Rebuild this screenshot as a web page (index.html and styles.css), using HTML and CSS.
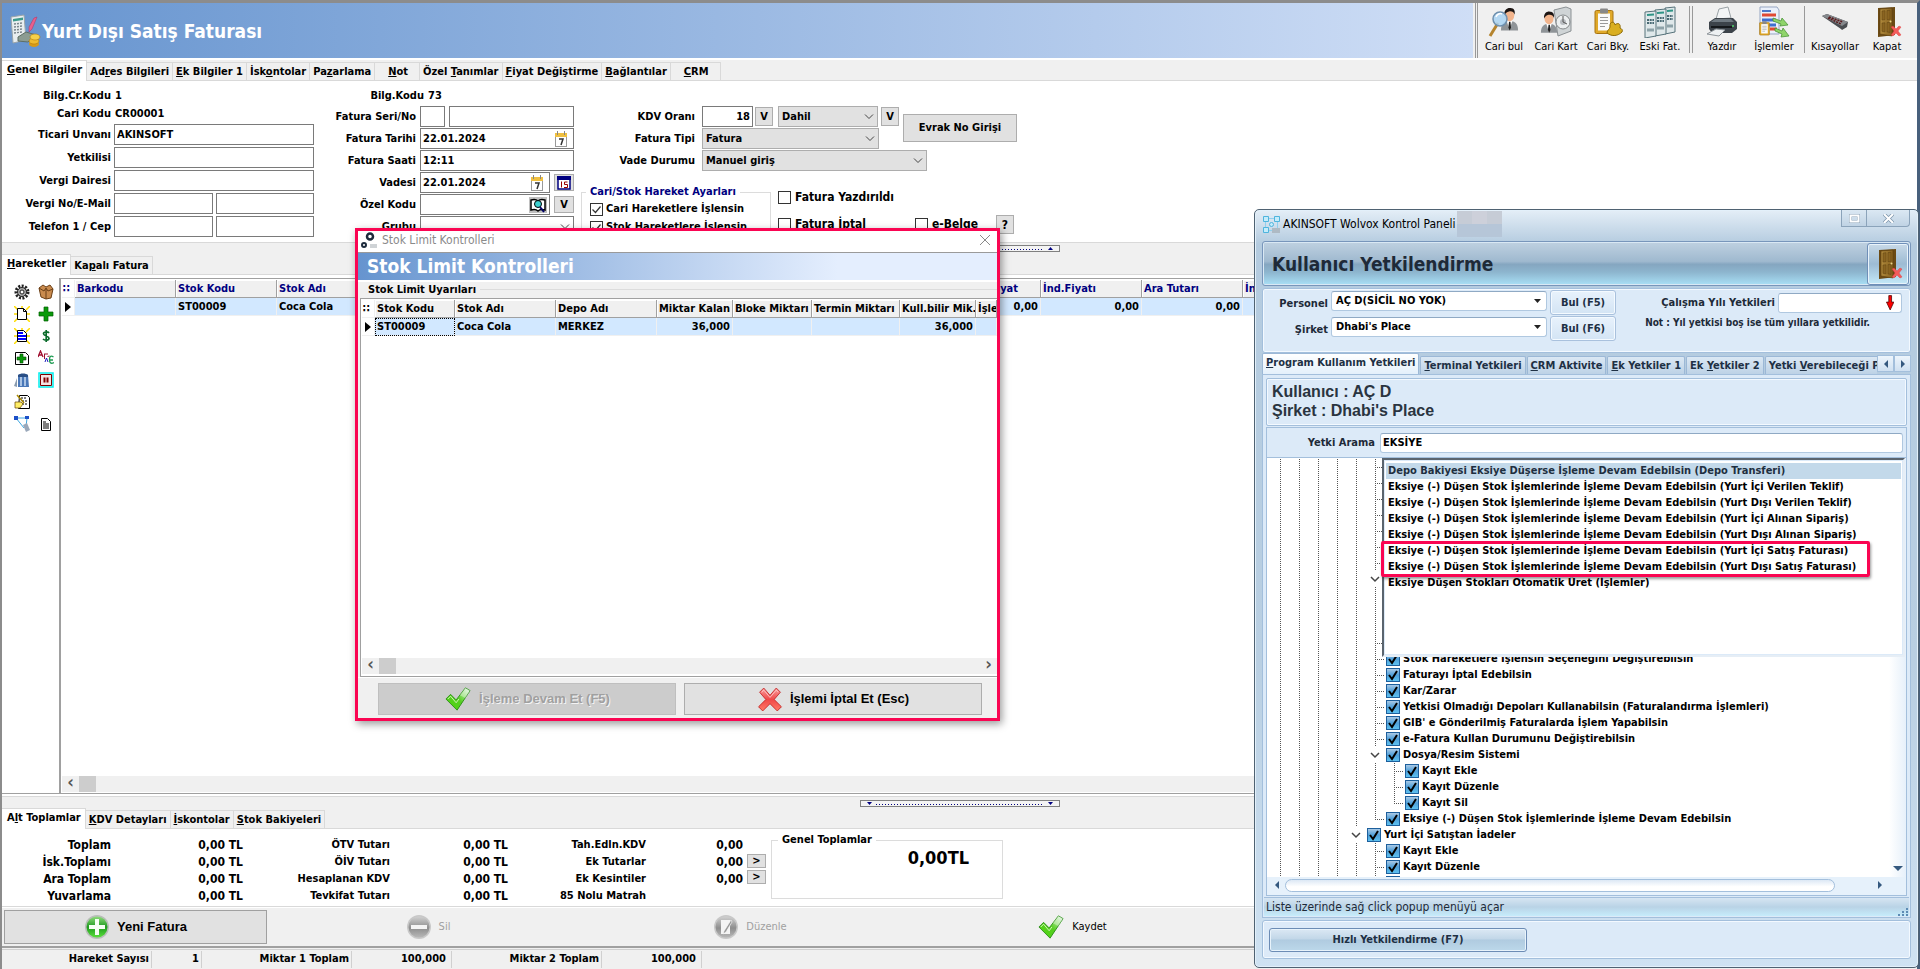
FILE: index.html
```html
<!DOCTYPE html>
<html lang="tr">
<head>
    <meta charset="UTF-8">
    <meta name="viewport" content="width=device-width, initial-scale=1.0">
    <title>Yurt Dışı Satış Faturası</title>
    <link rel="stylesheet" href="styles.css">
</head>
<body>
    <!-- shared icons -->
    <svg class="defs" width="0" height="0">
        <defs>
            <linearGradient id="gGreen" x1="0" y1="0" x2="0" y2="1"><stop offset="0" stop-color="#8fdc7c"/><stop offset=".5" stop-color="#1f9a1f"/><stop offset="1" stop-color="#5ae03c"/></linearGradient>
            <linearGradient id="gGray" x1="0" y1="0" x2="0" y2="1"><stop offset="0" stop-color="#d0d0d0"/><stop offset=".55" stop-color="#8e8e8e"/><stop offset="1" stop-color="#b8b8b8"/></linearGradient>
            <linearGradient id="gRed" x1="0" y1="0" x2="0" y2="1"><stop offset="0" stop-color="#f9a0a0"/><stop offset=".5" stop-color="#f04848"/><stop offset="1" stop-color="#ff7a66"/></linearGradient>
            <linearGradient id="gCheck" x1="0" y1="1" x2="1" y2="0"><stop offset="0" stop-color="#4fd60e"/><stop offset=".5" stop-color="#55cf20"/><stop offset="1" stop-color="#e8f6ea"/></linearGradient>
            <linearGradient id="gDoor" x1="0" y1="0" x2="1" y2="0"><stop offset="0" stop-color="#b08a3c"/><stop offset="1" stop-color="#86601e"/></linearGradient>
        </defs>
        <symbol id="i-door" viewBox="0 0 32 32">
            <path d="M7 2l17-1v28l-17 2z" fill="#6b4a14"/>
            <path d="M9 3l12-1v28l-12-2z" fill="url(#gDoor)" stroke="#5a3c0e" stroke-width=".6"/>
            <path d="M11 5l3-.3v9l-3 .3zM16 4.600l3-.3v9l-3 .3zM11 17l3-.2v9l-3-.5zM16 16.600l3-.2v10l-3-.5z" fill="#8a6420" stroke="#5e4212" stroke-width=".5"/>
            <circle cx="19.500" cy="15.500" r="1" fill="#e8d48a"/>
            <path d="M20 21l2-1 3 3 3-3 2 1-3 4 3 4-2 1-3-3-3 3-2-1 3-4z" fill="#f35b5b" stroke="#d33" stroke-width=".4"/>
        </symbol>
        <symbol id="i-check" viewBox="0 0 28 28">
            <path d="M1 14l5-5 6 6L22 2l5 3-14 21z" fill="url(#gCheck)" stroke="#2f8f1c" stroke-width="1"/>
            <path d="M22 2l5 3-5 8-6-3z" fill="#fff" opacity=".35"/>
            <path d="M3 14l3-3 6 7 3-4" fill="none" stroke="#d7f5c0" stroke-width="1"/>
        </symbol>
        <symbol id="i-cross" viewBox="0 0 24 24">
            <path d="M2 5l4-4 6 7 6-7 4 4-6 7 7 7-4 4-7-7-7 7-4-4 7-7z" fill="url(#gRed)" stroke="#c02020" stroke-width=".8"/>
            <path d="M4 5l2-2 6 7 6-7 2 2" fill="none" stroke="#fcc" stroke-width=".8"/>
        </symbol>
        <symbol id="i-cal" viewBox="0 0 16 16">
            <rect x="2.500" y="3.500" width="11" height="12" fill="#fff" stroke="#999"/>
            <rect x="2" y="2" width="12" height="4" fill="#f0c040"/>
            <path d="M4.500 0v4M11.500 0v4" stroke="#888"/>
            <path d="M6 8h4l-2 6" fill="none" stroke="#333" stroke-width="1.500"/>
        </symbol>
        <symbol id="i-man" viewBox="0 0 20 24">
            <path d="M1 24c0-7 3-10 9-10s9 3 9 10z" fill="#8f9498"/>
            <path d="M7 14l3 9 3-9z" fill="#fff"/><path d="M9.500 15h1.500l.6 6-1.400 3-1.400-3z" fill="#222"/>
            <ellipse cx="10" cy="8" rx="5" ry="6.500" fill="#f2b48c"/>
            <path d="M4.500 8C4 2 8 0 11 .5c4 0 5 3 4.500 7-1-3-3-4-6-3.500C7 4.500 6 6 4.500 8z" fill="#1c1513"/>
        </symbol>
        <symbol id="i-clip" viewBox="0 0 20 26">
            <rect x="1" y="2" width="18" height="23" rx="1.500" fill="#e0a92a" stroke="#a87410"/>
            <rect x="4" y="5" width="12" height="17" fill="#fafafa"/>
            <rect x="6" y="0" width="8" height="5" rx="1" fill="#888"/>
            <path d="M6 9h8M6 12h8M6 15h8M6 18h5" stroke="#999"/>
        </symbol>
    </svg>

    <div class="app">
        <header class="app-header">
            <div class="app-title">
                <svg width="32" height="34" viewBox="0 0 32 34">
                    <path d="M2 3l13-2 2 25-13 3z" fill="#e9eef0" stroke="#9aa5aa"/>
                    <path d="M4 5l10-1.500v2.500l-10 1.500z" fill="#3d9b8c"/>
                    <path d="M5 10l9-1M5 13l9-1M5 16l9-1M5 19l8-1" stroke="#7a868c" stroke-width="1.500" stroke-dasharray="2 1"/>
                    <path d="M28 3l-5 12-3 3 0-5 5-9z" fill="#e8608c" stroke="#b03060" stroke-width=".5"/>
                    <path d="M9 23l8-5 10 3-8 7-10-1z" fill="#8c9c92" stroke="#5d6e64"/>
                    <ellipse cx="25" cy="30" rx="5" ry="3" fill="#d99a16"/><ellipse cx="25" cy="27" rx="5" ry="3" fill="#f0bb2e" stroke="#b57c0c" stroke-width=".6"/>
                    <ellipse cx="26" cy="23" rx="5" ry="3" fill="#f6d04a" stroke="#b57c0c" stroke-width=".6"/>
                </svg>
                <h1>Yurt Dışı Satış Faturası</h1>
            </div>
            <nav class="toolbar">
                <button type="button"><svg viewBox="0 0 32 32"><use href="#i-man" x="12" y="1" width="19" height="24"/><path d="M2 30l8-13" stroke="#b5842e" stroke-width="3"/><circle cx="12" cy="13" r="7" fill="#a9d4f3" fill-opacity=".85" stroke="#6d8fae" stroke-width="1.500"/><path d="M8 11c1-3 4-4 6-3" stroke="#fff" stroke-width="1.500" fill="none"/></svg>Cari bul</button>
                <button type="button"><svg viewBox="0 0 32 32"><path d="M14 4l12-3 5 2v22l-13 5z" fill="#cfd4d6" stroke="#8b9194"/><circle cx="23" cy="16" r="7" fill="#eceff0" stroke="#85898b"/><circle cx="23" cy="16" r="3" fill="#b8bcc0"/><path d="M23 10v6l4 2" stroke="#555" fill="none"/><use href="#i-man" x="0" y="3" width="18" height="26"/></svg>Cari Kart</button>
                <button type="button"><svg viewBox="0 0 32 32"><use href="#i-clip" x="2" y="1" width="20" height="29"/><path d="M15 27c0-3 3-4 3-6-1-6 5-6 5-2 3-3 6-1 5 3 2 1 3 2 2 4-4 4-10 5-15 1z" fill="#d9ae20" stroke="#8f6c08"/></svg>Cari Bky.</button>
                <button type="button"><svg viewBox="0 0 32 32"><g fill="#dfe8ea" stroke="#56727a"><path d="M21 2l10-1v25l-10 2z"/><path d="M11 4l11-1v25l-11 2z"/><path d="M1 6l11-1v25l-11 2z"/></g><path d="M3 9l7-.6M13 7l7-.6M23 5l6-.6" stroke="#2f9486" stroke-width="2"/><path d="M3 14h7M3 17h7M13 12h7M13 15h7M23 10h6M23 13h6" stroke="#4a6a74" stroke-width="2" stroke-dasharray="2 .7"/><path d="M3 24h7M13 22h7M23 20h6" stroke="#8da2a8" stroke-width="3"/></svg>Eski Fat.</button>
                <span class="sep double"></span>
                <button type="button"><svg viewBox="0 0 32 32"><path d="M10 13L13 3l9-2 3 11z" fill="#f3f5f6" stroke="#9aa1a5"/><path d="M3 16l6-4h18l4 4v7l-5 4H6l-3-4z" fill="#3c434a"/><path d="M5 16h23l-3-3H9z" fill="#6e7880"/><path d="M5 21h21" stroke="#15181b" stroke-width="2"/><path d="M1 28l9-5 9 1-6 6z" fill="#eef1f3" stroke="#8d9499"/><circle cx="27" cy="20" r="1" fill="#4fd66a"/></svg>Yazdır</button>
                <button type="button"><svg viewBox="0 0 32 32"><path d="M2 1h17l2 3v24H2z" fill="#eaf0fa" stroke="#97a6c2"/><path d="M4 5h9" stroke="#4d77c8" stroke-width="2"/><path d="M4 9h14" stroke="#e04a34" stroke-width="3"/><path d="M4 14h14M4 19h14" stroke="#3f6fd0" stroke-width="3"/><path d="M12 23h7" stroke="#e04a34" stroke-width="3"/><use href="#i-clip" x="1" y="14" width="11" height="17"/><path d="M15 12l8 3 1-3 6 7-8 1 1-2-8-3zM17 22l7 3 1-3 6 8-8 1 1-3-7-3z" fill="#8fd46a" stroke="#3f8d2c" stroke-width=".7"/></svg>İşlemler</button>
                <span class="sep"></span>
                <button type="button"><svg viewBox="0 0 32 32"><path d="M3 10l5-2 21 8-1 5-5 3-1-1z" fill="#4a4d51"/><path d="M3 10l5-2 21 8-6 4z" fill="#85888c"/><path d="M10 11l14 5M9 12l13 6" stroke="#5a1a1c" stroke-width="1.500" stroke-dasharray="2 1"/></svg>Kısayollar</button>
                <button type="button"><svg viewBox="0 0 32 32"><use href="#i-door"/></svg>Kapat</button>
            </nav>
        </header>

        <div class="tabs">
            <button type="button" class="tab active"><u>G</u>enel Bilgiler</button>
            <button type="button" class="tab">Ad<u>r</u>es Bilgileri</button>
            <button type="button" class="tab"><u>E</u>k Bilgiler 1</button>
            <button type="button" class="tab">İsk<u>o</u>ntolar</button>
            <button type="button" class="tab">Pa<u>z</u>arlama</button>
            <button type="button" class="tab wide"><u>N</u>ot</button>
            <button type="button" class="tab">Özel <u>T</u>anımlar</button>
            <button type="button" class="tab"><u>F</u>iyat Değiştirme</button>
            <button type="button" class="tab"><u>B</u>ağlantılar</button>
            <button type="button" class="tab wide"><u>C</u>RM</button>
        </div>

        <form class="panel invoice" onsubmit="return false">
            <div class="col col-a">
                <div class="info"><span class="lbl">Bilg.Cr.Kodu</span><span>1</span></div>
                <div class="info"><span class="lbl">Cari Kodu</span><span>CR00001</span></div>
                <div class="field"><label class="lbl" for="unvan">Ticari Unvanı</label><input type="text" id="unvan" value="AKINSOFT"></div>
                <div class="field"><label class="lbl" for="yetkili">Yetkilisi</label><input type="text" id="yetkili"></div>
                <div class="field"><label class="lbl" for="daire">Vergi Dairesi</label><input type="text" id="daire"></div>
                <div class="field"><label class="lbl" for="vergino">Vergi No/E-Mail</label><input type="text" id="vergino"><input type="text" aria-label="E-Mail"></div>
                <div class="field"><label class="lbl" for="tel">Telefon 1 / Cep</label><input type="text" id="tel"><input type="text" aria-label="Cep"></div>
            </div>

            <div class="col col-b">
                <div class="info bilg"><span class="lbl">Bilg.Kodu</span><span>73</span></div>
                <div class="field"><label class="lbl" for="seri">Fatura Seri/No</label><input type="text" id="seri" class="tiny"><input type="text" aria-label="Fatura No"></div>
                <div class="field"><label class="lbl" for="tarih">Fatura Tarihi</label>
                    <span class="box"><input type="text" id="tarih" value="22.01.2024"><svg width="16" height="16"><use href="#i-cal"/></svg></span></div>
                <div class="field"><label class="lbl" for="saat">Fatura Saati</label><input type="text" id="saat" value="12:11"></div>
                <div class="field"><label class="lbl" for="vade">Vadesi</label>
                    <span class="box"><input type="text" id="vade" value="22.01.2024"><svg width="16" height="16"><use href="#i-cal"/></svg></span>
                    <button type="button" class="mini" aria-label="Takvim"><svg width="14" height="14" viewBox="0 0 14 14"><path d="M1 1h12v12H1z" fill="#fff" stroke="#000080" stroke-width="1.500"/><path d="M0 0h14v4H0z" fill="#000080"/><path d="M4.500 5.500v6M10.500 6H7.500v2.500h3v3h-3.500" fill="none" stroke="#900"/></svg></button></div>
                <div class="field"><label class="lbl" for="ozel">Özel Kodu</label>
                    <span class="box"><input type="text" id="ozel"><svg class="book" width="18" height="16" viewBox="0 0 18 16"><path d="M0 0h18v16H0z" fill="#c0c0c0"/><path d="M2 3c3-1 5-1 7 1 2-2 4-2 7-1v10c-3-1-5-1-7 1-2-2-4-2-7-1z" fill="#fff" stroke="#000" stroke-width="1.500"/><circle cx="9" cy="7" r="3.500" fill="#3dd0d0" stroke="#000"/><path d="M11 10l4 5" stroke="#006" stroke-width="2"/></svg></span>
                    <button type="button" class="mini">V</button></div>
                <div class="field"><label class="lbl" for="grup">Grubu</label><select id="grup" class="plain"><option></option></select></div>
            </div>

            <div class="col col-c">
                <div class="field">
                    <label class="lbl" for="kdv">KDV Oranı</label><input type="text" id="kdv" value="18">
                    <button type="button" class="mini">V</button>
                    <select id="dahil" aria-label="KDV Durumu"><option>Dahil</option></select>
                    <button type="button" class="mini">V</button>
                    <button type="button" class="evrak">Evrak No Girişi</button>
                </div>
                <div class="field"><label class="lbl" for="tip">Fatura Tipi</label><select id="tip"><option>Fatura</option></select></div>
                <div class="field"><label class="lbl" for="vadedurum">Vade Durumu</label><select id="vadedurum"><option>Manuel giriş</option></select></div>
                <div class="options">
                    <fieldset class="group">
                        <legend>Cari/Stok Hareket Ayarları</legend>
                        <label class="check"><input type="checkbox" checked>Cari Hareketlere İşlensin</label>
                        <label class="check"><input type="checkbox" checked>Stok Hareketlere İşlensin</label>
                    </fieldset>
                    <div class="flags">
                        <label class="check"><input type="checkbox">Fatura Yazdırıldı</label>
                        <div class="flag-row">
                            <label class="check"><input type="checkbox">Fatura İptal</label>
                            <label class="check"><input type="checkbox">e-Belge</label>
                            <button type="button" class="mini">?</button>
                        </div>
                    </div>
                </div>
            </div>
        </form>

        <div class="splitter"><span class="handle up"></span></div>

        <div class="tabs">
            <button type="button" class="tab active"><u>H</u>areketler</button>
            <button type="button" class="tab">Ka<u>p</u>alı Fatura</button>
        </div>

        <section class="moves">
            <div class="side">
                <button type="button" aria-label="Ayarlar"><svg viewBox="0 0 16 16"><circle cx="8" cy="8" r="6" fill="none" stroke="#222" stroke-width="3" stroke-dasharray="2 1.400"/><circle cx="8" cy="8" r="4.500" fill="#aaa" stroke="#222"/><circle cx="8" cy="8" r="2" fill="#fff" stroke="#222"/></svg></button>
                <button type="button" aria-label="Paket"><svg viewBox="0 0 16 16"><path d="M1 4l4-3 3 2 4-2 3 4-2 9-5 1-5-2z" fill="#c98b4e" stroke="#6b3f16"/><path d="M1 4l5 3 2-3 2 3 5-2M8 5v10" stroke="#6b3f16" fill="none"/></svg></button>
                <button type="button" aria-label="Yeni"><svg viewBox="0 0 16 16"><path d="M0 0l4 4M8 0v3M16 0l-4 4M0 8h3M16 8h-3M0 16l4-4M16 16l-4-4" stroke="#fd0" stroke-width="1.500"/><path d="M3.500 2.500h6l3 3v8h-9z" fill="#fff" stroke="#000"/><path d="M9.500 2.500v3h3" fill="none" stroke="#000"/></svg></button>
                <button type="button" aria-label="Ekle"><svg viewBox="0 0 16 16"><path d="M6 1h4v5h5v4h-5v5H6v-5H1V6h5z" fill="#0a9a0a" stroke="#056005" stroke-width=".7"/></svg></button>
                <button type="button" aria-label="Liste"><svg viewBox="0 0 16 16"><path d="M0 0l4 4M8 0v3M16 0l-4 4M0 8h3M16 8h-3M0 16l4-4M16 16l-4-4" stroke="#fd0" stroke-width="1.500"/><path d="M3.500 2.500h6l3 3v8h-9z" fill="#fff" stroke="#000"/><path d="M4 5h5M4 8h8M4 11h8" stroke="#00f" stroke-width="2"/></svg></button>
                <button type="button" aria-label="Döviz"><svg viewBox="0 0 16 16"><path d="M11 5C10 3.500 5.500 3.500 5.500 5.800S11 8 11 10.300 6.500 12.500 5 11M8.200 2v12" fill="none" stroke="#0a6b2a" stroke-width="1.700"/></svg></button>
                <button type="button" aria-label="Sayfa ekle"><svg viewBox="0 0 16 16"><path d="M1.500 2.500h10l3 3v9h-13z" fill="#fff" stroke="#000"/><path d="M6 4h3v3h3v3H9v3H6v-3H3V7h3z" fill="#0a9a0a" stroke="#040" stroke-width=".6"/></svg></button>
                <button type="button" aria-label="Harf"><svg viewBox="0 0 16 16"><path d="M0 7l2.500-6L5 7M1 5h3" stroke="#a01030" stroke-width="1.300" fill="none"/><path d="M6.500 4v5M6 4h4M9.500 6.500l2-.5" stroke="#a01030" fill="none"/><path d="M7 12l1.500-4 1.500 4" stroke="#2020c0" fill="none"/><path d="M15.500 7c-3-2-4 0-4 2.500s1 5 4.500 3M12 10h3" stroke="#1c9a50" stroke-width="1.300" fill="none"/></svg></button>
                <button type="button" aria-label="Depo"><svg viewBox="0 0 16 16"><path d="M4 3h10l1 12H4z" fill="#4a78b8"/><path d="M4 3c2-2 8-2 10 0v2H4z" fill="#2a4f86"/><path d="M7 5v9M11 5v9" stroke="#c9dcf2" stroke-width="1.500"/><path d="M0 14L3 6v9z" fill="#8a9cb0"/></svg></button>
                <button type="button" aria-label="Durdur"><svg viewBox="0 0 16 16"><path d="M1 1h14v14H1z" fill="#fff" stroke="#0ee" stroke-width="1.500"/><path d="M2.500 2.500h11v11h-11z" fill="#f4e4e4" stroke="#800000"/><path d="M6.500 5.500v5M9.500 5.500v5" stroke="#800000" stroke-width="2"/></svg></button>
                <button type="button" aria-label="Not"><svg viewBox="0 0 16 16"><path d="M5.500 1.500h8l2 2v11h-11z" fill="#fff" stroke="#000"/><path d="M7 4h5M8 7h5M8 10h5" stroke="#000" stroke-dasharray="2 1"/><path d="M1 8h6l2 2-3 4H1z" fill="#fe6" stroke="#640" stroke-width=".7"/><path d="M3 1l7 8" stroke="#a80" stroke-width="1.500"/></svg></button>
                <span></span>
                <button type="button" aria-label="Bağlantı"><svg viewBox="0 0 16 16"><path d="M2 2h12M2 2l8 10M13 2l-1 9" stroke="#3da6e0" fill="none"/><path d="M0 0h4v4H0zM11 0h4v3h-4z" fill="#1c50c8"/><path d="M9 9l4-2 3 7-4 2z" fill="#9aa8ba"/></svg></button>
                <button type="button" aria-label="Belge"><svg viewBox="0 0 16 16"><path d="M3.500 2.500h6l3 3v9h-9z" fill="#fff" stroke="#000"/><path d="M5 6h3M5 8h6M5 10h6M5 12h6" stroke="#000"/></svg></button>
            </div>
            <div class="grid-wrap">
                <table class="grid moves-grid">
                    <colgroup><col class="c-ind"><col class="c-std"><col class="c-std"><col class="c-name"><col class="c-std"><col class="c-std"><col class="c-std"><col class="c-std"><col class="c-std"><col class="c-std"><col class="c-std"><col class="c-rest"></colgroup>
                    <thead><tr><th class="ind">∷</th><th>Barkodu</th><th>Stok Kodu</th><th>Stok Adı</th><th></th><th></th><th></th><th></th><th class="r-pad">Fiyat</th><th>İnd.Fiyatı</th><th>Ara Tutarı</th><th>İnd.Tutarı</th></tr></thead>
                    <tbody><tr><td class="ind"><span class="arrow"></span></td><td></td><td>ST00009</td><td>Coca Cola</td><td></td><td></td><td></td><td></td><td class="num">0,00</td><td class="num">0,00</td><td class="num">0,00</td><td></td></tr></tbody>
                </table>
                <div class="hscroll"><span class="chev">‹</span><span class="thumb"></span></div>
            </div>
        </section>

        <div class="splitter low"><span class="handle down"></span></div>

        <div class="tabs">
            <button type="button" class="tab active">A<u>l</u>t Toplamlar</button>
            <button type="button" class="tab"><u>K</u>DV Detayları</button>
            <button type="button" class="tab"><u>İ</u>skontolar</button>
            <button type="button" class="tab"><u>S</u>tok Bakiyeleri</button>
        </div>

        <section class="panel totals">
            <dl class="sums s1">
                <dt>Toplam</dt><dd>0,00 TL</dd>
                <dt>İsk.Toplamı</dt><dd>0,00 TL</dd>
                <dt>Ara Toplam</dt><dd>0,00 TL</dd>
                <dt>Yuvarlama</dt><dd>0,00 TL</dd>
            </dl>
            <dl class="sums s2">
                <dt>ÖTV Tutarı</dt><dd>0,00 TL</dd>
                <dt>ÖİV Tutarı</dt><dd>0,00 TL</dd>
                <dt>Hesaplanan KDV</dt><dd>0,00 TL</dd>
                <dt>Tevkifat Tutarı</dt><dd>0,00 TL</dd>
            </dl>
            <dl class="sums s3">
                <dt>Tah.Edln.KDV</dt><dd>0,00</dd>
                <dt>Ek Tutarlar</dt><dd>0,00</dd>
                <dt>Ek Kesintiler</dt><dd>0,00</dd>
                <dt>85 Nolu Matrah</dt><dd></dd>
            </dl>
            <div class="more"><button type="button">&gt;</button><button type="button">&gt;</button></div>
            <fieldset class="group grand">
                <legend>Genel Toplamlar</legend>
                <output>0,00TL</output>
            </fieldset>
        </section>

        <div class="actions">
            <button type="button" class="primary"><svg width="26" height="26" viewBox="0 0 26 26"><circle cx="13" cy="13" r="12" fill="#b9bdb9"/><circle cx="13" cy="13" r="10.500" fill="url(#gGreen)"/><path d="M11 5h4v6h6v4h-6v6h-4v-6H5v-4h6z" fill="#f6fff4"/></svg>Yeni Fatura</button>
            <button type="button" disabled><svg width="26" height="26" viewBox="0 0 26 26"><circle cx="13" cy="13" r="12" fill="#c8c8c8"/><circle cx="13" cy="13" r="10.500" fill="url(#gGray)"/><path d="M5 11h16v4H5z" fill="#f4f4f4"/></svg>Sil</button>
            <button type="button" disabled><svg width="26" height="26" viewBox="0 0 26 26"><circle cx="13" cy="13" r="12" fill="#c8c8c8"/><circle cx="13" cy="13" r="10.500" fill="url(#gGray)"/><path d="M8 6h9v14H8z" fill="#f4f4f4"/><path d="M18 6l-7 11-1 3 3-2 6-10z" fill="#999" stroke="#fff" stroke-width=".6"/></svg>Düzenle</button>
            <button type="button"><svg width="28" height="26"><use href="#i-check"/></svg>Kaydet</button>
        </div>

        <footer class="status">
            <span class="s-name">Hareket Sayısı</span><span class="s-one">1</span>
            <span class="s-name">Miktar 1 Toplam</span><span class="s-val">100,000</span>
            <span class="s-name">Miktar 2 Toplam</span><span class="s-val">100,000</span>
        </footer>
    </div>

    <!-- stock limit dialog -->
    <div class="dialog" role="dialog" aria-label="Stok Limit Kontrolleri">
        <div class="dlg-bar">
            <svg width="17" height="17" viewBox="0 0 17 17"><circle cx="9" cy="4.500" r="3" fill="none" stroke="#1d2b3c" stroke-width="2.500"/><circle cx="3" cy="13" r="2" fill="none" stroke="#1d2b3c" stroke-width="2"/><path d="M9 12h7v4H9z" fill="#cfd3d6"/></svg>
            <span>Stok Limit Kontrolleri</span>
            <button type="button" aria-label="Kapat"><svg width="12" height="12" viewBox="0 0 12 12"><path d="M1 1l10 10M11 1L1 11" stroke="#8a8a8a"/></svg></button>
        </div>
        <h2>Stok Limit Kontrolleri</h2>
        <div class="dlg-legend"><span>Stok Limit Uyarıları</span></div>
        <div class="dlg-grid">
            <table class="grid black">
                <colgroup><col class="d-ind"><col class="d-code"><col class="d-std"><col class="d-std"><col class="d-kalan"><col class="d-bloke"><col class="d-termin"><col class="d-kalan"><col class="c-rest"></colgroup>
                <thead><tr><th class="ind">∷</th><th>Stok Kodu</th><th>Stok Adı</th><th>Depo Adı</th><th>Miktar Kalan</th><th>Bloke Miktarı</th><th>Termin Miktarı</th><th>Kull.bilir Mik.</th><th>İşlem Miktarı</th></tr></thead>
                <tbody><tr><td class="ind"><span class="arrow"></span></td><td class="focus">ST00009</td><td>Coca Cola</td><td>MERKEZ</td><td class="num">36,000</td><td></td><td></td><td class="num">36,000</td><td></td></tr></tbody>
            </table>
            <div class="hscroll"><span class="chev">‹</span><span class="thumb"></span><span class="chev end">›</span></div>
        </div>
        <div class="dlg-buttons">
            <button type="button" disabled><svg width="28" height="26"><use href="#i-check"/></svg>İşleme Devam Et (F5)</button>
            <button type="button"><svg width="26" height="25"><use href="#i-cross"/></svg>İşlemi İptal Et (Esc)</button>
        </div>
    </div>

    <!-- authorization window -->
    <div class="auth">
        <div class="auth-bar">
            <svg width="17" height="17" viewBox="0 0 17 17"><path d="M2.500 2.500h12v12h-12z" fill="none" stroke="#8fd0ee"/><g fill="#c4ecfb" stroke="#4fb4dd"><path d="M.5.500h5v5h-5zM11.500.500h5v5h-5zM.5 11.500h5v5h-5z"/><circle cx="8.500" cy="8.500" r="2"/></g><path d="M9 12h8v5H9z" fill="#aebac4"/></svg>
            <span>AKINSOFT Wolvox Kontrol Paneli</span>
            <span class="mosaic"><i></i><i></i><i></i><i></i><i></i><i></i></span>
            <span class="caption-btns">
                <button type="button" aria-label="Büyüt"><svg width="11" height="9" viewBox="0 0 11 9"><path d="M1.500 1.500h8v6h-8z" fill="none" stroke="#8ca2b6" stroke-width="3"/><path d="M1.500 1.500h8v6h-8z" fill="none" stroke="#fff" stroke-width="2"/></svg></button>
                <button type="button" class="x" aria-label="Kapat"><svg width="11" height="9" viewBox="0 0 11 9"><path d="M1 0l9 9M10 0L1 9" stroke="#7f97ad" stroke-width="3.500"/><path d="M1 0l9 9M10 0L1 9" stroke="#fff" stroke-width="2"/></svg></button>
            </span>
        </div>
        <div class="auth-head">
            <h2>Kullanıcı Yetkilendirme</h2>
            <button type="button" aria-label="Çıkış"><svg width="32" height="32"><use href="#i-door"/></svg></button>
        </div>
        <div class="auth-box who">
            <div class="who-left">
                <label for="personel">Personel</label><select id="personel"><option>AÇ D(SİCİL NO YOK)</option></select><button type="button">Bul (F5)</button>
                <label for="sirket">Şirket</label><select id="sirket"><option>Dhabi's Place</option></select><button type="button">Bul (F6)</button>
            </div>
            <div class="who-right">
                <div class="year"><label for="yil">Çalışma Yılı Yetkileri</label><span class="year-box"><input type="text" id="yil"><svg width="9" height="16" viewBox="0 0 9 16"><path d="M3 0h3v7h2.500L4.500 15.500.5 7H3z" fill="#f00" stroke="#400" stroke-width=".8"/></svg></span></div>
                <p>Not : Yıl yetkisi boş ise tüm yıllara yetkilidir.</p>
            </div>
        </div>
        <div class="auth-tabs">
            <div class="auth-tablist">
                <button type="button" class="active"><u>P</u>rogram Kullanım Yetkileri</button>
                <button type="button"><u>T</u>erminal Yetkileri</button>
                <button type="button"><u>C</u>RM Aktivite</button>
                <button type="button"><u>E</u>k Yetkiler 1</button>
                <button type="button">Ek <u>Y</u>etkiler 2</button>
                <button type="button">Yetki <u>V</u>erebileceği Program</button>
            </div>
            <div class="spin"><button type="button" class="l" aria-label="Geri"></button><button type="button" class="r" aria-label="İleri"></button></div>
        </div>
        <div class="auth-page">
            <div class="auth-user"><div>Kullanıcı : AÇ D</div><div>Şirket : Dhabi's Place</div></div>
            <div class="auth-search"><label for="arama">Yetki Arama</label><input type="text" id="arama" value="EKSİYE"></div>
            <div class="tree">
                <ul class="rows">
                    <li><span class="g n5"></span><span class="t"></span></li>
                    <li><span class="g n5"></span><span class="t"></span></li>
                    <li><span class="g n5"></span><span class="t"></span></li>
                    <li><span class="g n5"></span><span class="t"></span></li>
                    <li><span class="g n5"></span><span class="t"></span></li>
                    <li><span class="g n5"></span><span class="t"></span></li>
                    <li><span class="g n5"></span><span class="t"></span></li>
                    <li><span class="g n5"></span><span class="o"></span></li>
                    <li><span class="g n6"></span></li>
                    <li><span class="g n6"></span></li>
                    <li><span class="g n6"></span></li>
                    <li><span class="g n5"></span><span class="t"></span></li>
                    <li><span class="g n5"></span><span class="t"></span><label><input type="checkbox" checked>Stok Hareketlere İşlensin Seçeneğini Değiştirebilsin</label></li>
                    <li><span class="g n5"></span><span class="t"></span><label><input type="checkbox" checked>Faturayı İptal Edebilsin</label></li>
                    <li><span class="g n5"></span><span class="t"></span><label><input type="checkbox" checked>Kar/Zarar</label></li>
                    <li><span class="g n5"></span><span class="t"></span><label><input type="checkbox" checked>Yetkisi Olmadığı Depoları Kullanabilsin (Faturalandırma İşlemleri)</label></li>
                    <li><span class="g n5"></span><span class="t"></span><label><input type="checkbox" checked>GIB' e Gönderilmiş Faturalarda İşlem Yapabilsin</label></li>
                    <li><span class="g n5"></span><span class="t"></span><label><input type="checkbox" checked>e-Fatura Kullan Durumunu Değiştirebilsin</label></li>
                    <li><span class="g n5"></span><span class="o"></span><label><input type="checkbox" checked>Dosya/Resim Sistemi</label></li>
                    <li><span class="g n6"></span><span class="t"></span><label><input type="checkbox" checked>Kayıt Ekle</label></li>
                    <li><span class="g n6"></span><span class="t"></span><label><input type="checkbox" checked>Kayıt Düzenle</label></li>
                    <li><span class="g n6"></span><span class="t last"></span><label><input type="checkbox" checked>Kayıt Sil</label></li>
                    <li><span class="g n5"></span><span class="t last"></span><label><input type="checkbox" checked>Eksiye (-) Düşen Stok İşlemlerinde İşleme Devam Edebilsin</label></li>
                    <li><span class="g n4"></span><span class="o"></span><label><input type="checkbox" checked>Yurt İçi Satıştan İadeler</label></li>
                    <li><span class="g n5"></span><span class="t"></span><label><input type="checkbox" checked>Kayıt Ekle</label></li>
                    <li><span class="g n5"></span><span class="t"></span><label><input type="checkbox" checked>Kayıt Düzenle</label></li>
                    <li><span class="g n5"></span><span class="t"></span><label><input type="checkbox" checked aria-label="Kayıt Sil"></label></li>
                </ul>
                <div class="vscroll"><span class="tri-down"></span></div>
                <ul class="hits">
                    <li class="sel">Depo Bakiyesi Eksiye Düşerse İşleme Devam Edebilsin (Depo Transferi)</li>
                    <li>Eksiye (-) Düşen Stok İşlemlerinde İşleme Devam Edebilsin (Yurt İçi Verilen Teklif)</li>
                    <li>Eksiye (-) Düşen Stok İşlemlerinde İşleme Devam Edebilsin (Yurt Dışı Verilen Teklif)</li>
                    <li>Eksiye (-) Düşen Stok İşlemlerinde İşleme Devam Edebilsin (Yurt İçi Alınan Sipariş)</li>
                    <li>Eksiye (-) Düşen Stok İşlemlerinde İşleme Devam Edebilsin (Yurt Dışı Alınan Sipariş)</li>
                    <li>Eksiye (-) Düşen Stok İşlemlerinde İşleme Devam Edebilsin (Yurt İçi Satış Faturası)</li>
                    <li>Eksiye (-) Düşen Stok İşlemlerinde İşleme Devam Edebilsin (Yurt Dışı Satış Faturası)</li>
                    <li>Eksiye Düşen Stokları Otomatik Üret (İşlemler)</li>
                </ul>
                <span class="marker"></span>
            </div>
            <div class="tree-scroll"><span class="tri-left"></span><span class="pill"></span><span class="tri-right"></span></div>
            <div class="auth-status"><span>Liste üzerinde sağ click popup menüyü açar</span><svg width="10" height="10" viewBox="0 0 10 10"><path d="M0 9h2M4 9h2M8 9h2M4 6h2M8 6h2M8 3h2" stroke="#5d8bb4" stroke-width="2"/></svg></div>
        </div>
        <div class="auth-box foot"><button type="button">Hızlı Yetkilendirme (F7)</button></div>
    </div>
</body>
</html>
```
FILE: styles.css
```css
* {
    box-sizing: border-box;
}
body {
    margin: 0;
    background: #f0f0f0;
    font: bold 11px/16px "DejaVu Sans Condensed", "Noto Sans", sans-serif;
    color: #000;
    overflow: hidden;
}
button, input, select {
    font: inherit;
    color: inherit;
    margin: 0;
    padding: 0;
    border-radius: 0;
}
h1, h2, p, ul, dl, dd {
    margin: 0;
    padding: 0;
}
ul {
    list-style: none;
}
.defs {
    position: absolute;
}

/* main window */
.app {
    display: flex;
    flex-direction: column;
    height: 100vh;
    border: solid #8c8c8c;
    border-width: 3px 3px 0 2px;
    border-right-color: #48607c;
}
.app-header {
    display: flex;
    height: 55px;
}
.app-title {
    flex: 1;
    display: flex;
    align-items: center;
    padding-left: 7px;
    background: linear-gradient(90deg, #6694cf, #cfdef6);
}
.app-title h1 {
    font-size: 19px;
    color: #fff;
    margin-left: 1px;
}
.toolbar {
    display: flex;
    padding: 3px 4px 0 0;
    border-left: 3px double #999;
    margin-left: 2px;
}
.toolbar button {
    width: 52px;
    border: 0;
    background: none;
    font-weight: normal;
    white-space: nowrap;
    display: flex;
    flex-direction: column;
    align-items: center;
}
.toolbar svg {
    width: 32px;
    height: 32px;
    flex: none;
    margin-bottom: 1px;
}
.sep {
    width: 1px;
    background: #999;
    margin: 0 4px;
    height: 47px;
}
.sep.double {
    width: 4px;
    margin: 0 3px;
    background: none;
    border: solid #999;
    border-width: 0 1px;
}

.tabs {
    display: flex;
    align-items: flex-end;
    padding-top: 2px;
    height: 23px;
    border-bottom: 1px solid #d9d9d9;
    flex: none;
}
.app-header + .tabs {
    border-top: 2px solid #fff;
}
.tab {
    height: 18px;
    padding: 0 3px;
    border: 1px solid #d9d9d9;
    border-width: 1px 1px 0 0;
    background: #f0f0f0;
    white-space: nowrap;
}
.tab.wide {
    padding: 0 11px 0 13px;
}
.tab.active {
    height: 21px;
    padding: 0 4px 3px 5px;
    background: #fff;
    margin-bottom: -1px;
}
.panel {
    background: #fff;
    border-bottom: 1px solid #d9d9d9;
    flex: none;
}

/* invoice form */
.invoice {
    display: flex;
    padding: 6px 0 5px;
}
.col {
    display: flex;
    flex-direction: column;
}
.info, .field {
    display: flex;
    align-items: center;
}
.info {
    height: 18px;
}
.lbl {
    text-align: right;
    white-space: nowrap;
    flex: none;
}
.field input, .box {
    height: 21px;
    border: 1px solid #7a7a7a;
    background: #fff;
    padding: 0 2px;
    min-width: 0;
    flex: 1;
}
.field {
    height: 21px;
}
.box {
    display: flex;
    align-items: center;
}
.field .box input {
    border: 0;
    height: 18px;
    padding: 0;
}
.box svg {
    flex: none;
    margin-right: 2px;
}
.box .book {
    margin-right: 0;
}
.col-a {
    width: 312px;
    gap: 2px;
}
.col-a .lbl {
    width: 109px;
}
.col-a .info {
    gap: 4px;
    margin-bottom: -2px;
}
.col-a .info + .field {
    margin-top: 1px;
}
.col-a .field {
    gap: 3px;
}
.col-b {
    width: 260px;
    gap: 1px;
}
.col-b .lbl {
    width: 102px;
}
.col-b .bilg .lbl {
    width: 110px;
}
.col-b .info, .col-b .field {
    gap: 4px;
}
.col-b .field .tiny {
    flex: none;
    width: 25px;
}
select {
    appearance: none;
    height: 21px;
    padding: 0 16px 0 3px;
    border: 1px solid #adadad;
    background: #e1e1e1 url("data:image/svg+xml,%3Csvg xmlns='http://www.w3.org/2000/svg' width='10' height='6'%3E%3Cpath d='M1 .5l4 4 4-4' fill='none' stroke='%23444'/%3E%3C/svg%3E") no-repeat right 3px center;
}
select.plain {
    background-color: #fff;
    border-color: #7a7a7a;
    flex: 1;
}
.mini {
    flex: none;
    width: 20px;
    height: 17px;
    border: 1px solid #adadad;
    background: #e1e1e1;
    display: flex;
    align-items: center;
    justify-content: center;
}
.col-c {
    flex: 1;
    gap: 1px;
    padding-top: 19px;
}
.col-c .lbl {
    width: 121px;
    margin-right: 7px;
}
.col-c .mini {
    width: 18px;
    height: 19px;
}
.field #kdv {
    flex: none;
    width: 51px;
    text-align: right;
    margin-right: 2px;
}
#dahil {
    width: 100px;
    margin: 0 3px 0 5px;
}
#tip {
    width: 177px;
}
#vadedurum {
    width: 225px;
}
.evrak {
    flex: none;
    width: 114px;
    height: 28px;
    margin: 23px 0 0 4px;
    border: 1px solid #adadad;
    background: #e1e1e1;
}
.options {
    display: flex;
    padding: 12px 0 0 7px;
    height: 60px;
}
.group {
    margin: 0;
    border: 1px solid #dcdcdc;
    padding: 0 8px;
}
.group legend {
    padding: 0 4px;
    margin-left: -4px;
}
.options .group {
    width: 190px;
    height: 62px;
    color: #000080;
}
.check {
    display: flex;
    align-items: center;
    gap: 3px;
    height: 18px;
    color: #000;
    white-space: nowrap;
}
.check input {
    appearance: none;
    flex: none;
    width: 13px;
    height: 13px;
    border: 1px solid #333;
    background: #fff;
}
.check input:checked {
    background: url("data:image/svg+xml,%3Csvg xmlns='http://www.w3.org/2000/svg' width='11' height='11'%3E%3Cpath d='M1.500 5.500l3 3 5-6' fill='none' stroke='%23333' stroke-width='1.200'/%3E%3C/svg%3E");
}
.flags {
    margin-left: 7px;
    padding-top: 4px;
    font-size: 12px;
}
.flags .check {
    gap: 4px;
}
.flag-row {
    display: flex;
    margin-top: 9px;
}
.flag-row .check:first-child {
    width: 137px;
}
.flag-row .check + .check {
    width: 81px;
}

.splitter {
    flex: none;
    height: 9px;
    padding-top: 2px;
}
.splitter.low {
    height: 10px;
    padding-top: 3px;
    border-top: 1px solid #d9d9d9;
}
.handle {
    display: block;
    width: 200px;
    height: 7px;
    margin: 0 auto;
    border: 1px solid #808080;
    background:
        url("data:image/svg+xml,%3Csvg xmlns='http://www.w3.org/2000/svg' width='9' height='5'%3E%3Cpath d='M2 4h5L4.500 1z' fill='%23000080'/%3E%3C/svg%3E") no-repeat 4px 0,
        url("data:image/svg+xml,%3Csvg xmlns='http://www.w3.org/2000/svg' width='9' height='5'%3E%3Cpath d='M2 4h5L4.500 1z' fill='%23000080'/%3E%3C/svg%3E") no-repeat right 4px top 0,
        repeating-linear-gradient(90deg, #000080 0 1px, transparent 1px 3px) no-repeat center 3px / 168px 1px,
        #f4f4f4;
}
.handle.down {
    background-image:
        url("data:image/svg+xml,%3Csvg xmlns='http://www.w3.org/2000/svg' width='9' height='5'%3E%3Cpath d='M2 1h5L4.500 4z' fill='%23000080'/%3E%3C/svg%3E"),
        url("data:image/svg+xml,%3Csvg xmlns='http://www.w3.org/2000/svg' width='9' height='5'%3E%3Cpath d='M2 1h5L4.500 4z' fill='%23000080'/%3E%3C/svg%3E"),
        repeating-linear-gradient(90deg, #000080 0 1px, transparent 1px 3px);
}

/* stock movements */
.moves {
    flex: 1;
    min-height: 0;
    display: flex;
    background: #fff;
    padding: 3px 0 2px;
}
.side {
    width: 57px;
    display: grid;
    grid-template-columns: 24px 24px;
    grid-auto-rows: 22px;
    padding: 3px 0 0 8px;
    border-bottom: 1px solid #a0a0a0;
}
.side button {
    border: 0;
    background: none;
    display: flex;
    align-items: center;
    justify-content: center;
}
.side svg {
    width: 16px;
    height: 16px;
}
.grid-wrap {
    flex: 1;
    min-width: 0;
    display: flex;
    flex-direction: column;
    border: solid #a0a0a0;
    border-width: 1px 0 1px 2px;
    padding: 1px 0 1px 1px;
}
.grid {
    width: 100%;
    table-layout: fixed;
    border-collapse: separate;
    border-spacing: 0;
    color: #000080;
}
.grid.black {
    color: #000;
}
.grid th, .grid td {
    height: 18px;
    padding: 0 2px;
    text-align: left;
    line-height: 15px;
    white-space: nowrap;
    overflow: hidden;
}
.grid th {
    background: #f0f0f0;
    border: solid #a0a0a0;
    border-width: 0 1px 1px 0;
    box-shadow: inset 1px 1px #fff;
}
.grid td {
    background: #d2e8ff;
    color: #000;
    border: solid #f0f0f0;
    border-width: 0 1px 1px 0;
}
.grid .ind {
    padding: 0 1px;
    background: #fff;
    border-color: #f0f0f0;
}
.grid .num {
    text-align: right;
}
.grid .r-pad {
    text-align: right;
    padding-right: 22px;
}
.grid .focus {
    outline: 1px dotted #000;
    outline-offset: -1px;
}
.arrow {
    display: block;
    margin-left: 2px;
    width: 0;
    border: solid transparent;
    border-width: 5px 0 5px 6px;
    border-left-color: #000;
}
.c-ind { width: 13px; }
.c-std { width: 101px; }
.c-name { width: 259px; }
.hscroll {
    margin-top: auto;
    height: 16px;
    display: flex;
    background: #f0f0f0;
    font: bold 18px/12px "DejaVu Sans Condensed", sans-serif;
    color: #555;
}
.chev {
    width: 17px;
    text-align: center;
}
.chev.end {
    margin-left: auto;
}
.thumb {
    width: 17px;
    background: #cdcdcd;
}

/* totals */
.totals {
    display: flex;
    height: 78px;
    padding-top: 7px;
}
.sums {
    display: grid;
    grid-auto-rows: 17px;
    align-items: center;
    text-align: right;
    font-size: 12px;
}
.sums dt {
    white-space: nowrap;
    font-size: 11px;
}
.s1 dt {
    font-size: 12px;
}
.s1 { grid-template-columns: 109px 132px; }
.s2 { grid-template-columns: 147px 118px; }
.s3 { grid-template-columns: 138px 97px; }
.more {
    padding: 18px 5px 0 4px;
    display: flex;
    flex-direction: column;
    gap: 2px;
}
.more button {
    width: 19px;
    height: 14px;
    line-height: 12px;
    border: 1px solid #adadad;
    background: #e1e1e1;
}
.grand {
    width: 232px;
    height: 67px;
    margin-top: -4px;
}
.grand legend {
    margin-left: -2px;
}
.grand output {
    display: block;
    font-size: 18px;
    line-height: 20px;
    text-align: right;
    padding-right: 25px;
}

.actions {
    flex: none;
    display: flex;
    height: 41px;
    padding: 2px 0 2px 2px;
    border-bottom: 2px solid #a0a0a0;
    border-top: 1px solid #fff;
}
.actions button {
    flex: 0 0 322px;
    border: 0;
    background: none;
    display: flex;
    align-items: center;
    justify-content: center;
    gap: 7px;
    font-weight: normal;
}
.actions .primary {
    flex-basis: 263px;
    border: 1px solid #a0a0a0;
    background: #e1e1e1;
    font: bold 13px/16px "Liberation Sans", Arial, sans-serif;
}
.actions button:disabled {
    color: #a0a0a0;
}
.status {
    flex: none;
    display: flex;
    height: 20px;
    padding-top: 1px;
    margin-top: 1px;
    border-top: 1px solid #d0d0d0;
}
.status span {
    text-align: right;
    border-right: 1px solid #d0d0d0;
    padding-right: 2px;
    line-height: 16px;
    height: 17px;
}
.s-name { width: 150px; }
.s-one { width: 50px; }
.s-val { width: 100px; }
.status .s-val { padding-right: 5px; }

/* dialog */
.dialog {
    position: absolute;
    left: 355px;
    top: 228px;
    width: 645px;
    height: 493px;
    display: flex;
    flex-direction: column;
    border: 3px solid #fa0552;
    background: #f0f0f0;
    box-shadow: 2px 3px 8px rgba(0, 0, 0, .4);
}
.dlg-bar {
    display: flex;
    flex: none;
    height: 22px;
    padding: 0 6px 3px 3px;
    align-items: center;
    background: #fff;
    border-bottom: 1px solid #9a9a9a;
    color: #8a8a8a;
    font-weight: normal;
    font-size: 12px;
}
.dlg-bar span {
    flex: 1;
    margin-left: 4px;
}
.dlg-bar button {
    display: flex;
    border: 0;
    background: none;
}
.dialog h2 {
    padding-left: 9px;
    font-size: 19px;
    line-height: 27px;
    color: #fff;
    background: linear-gradient(90deg, #6694cf, #e4eefe 75%);
}
.dlg-legend {
    display: flex;
    height: 18px;
    border-top: 2px solid #fff;
    padding-left: 10px;
}
.dlg-legend::after {
    content: "";
    flex: 1;
    margin: 7px 0 0 4px;
    border-top: 1px solid #dcdcdc;
}
.dlg-grid {
    flex: 1;
    display: flex;
    flex-direction: column;
    margin-left: 2px;
    padding: 1px 0 2px 1px;
    background: #fff;
    border: solid #a0a0a0;
    border-width: 1px 0 1px 1px;
}
.d-ind { width: 13px; }
.d-code { width: 80px; }
.d-std { width: 101px; }
.d-kalan { width: 76px; }
.d-bloke { width: 79px; }
.d-termin { width: 88px; }
.dlg-buttons {
    display: flex;
    gap: 8px;
    padding: 5px 15px 3px 20px;
    border-top: 1px solid #fff;
}
.dlg-buttons button {
    flex: 1;
    height: 32px;
    border: 1px solid #adadad;
    background: #e1e1e1;
    display: flex;
    align-items: center;
    justify-content: center;
    gap: 7px;
    font: bold 13px/16px "Liberation Sans", Arial, sans-serif;
}
.dlg-buttons button:disabled {
    background: #ccc;
    border-color: #bfbfbf;
    color: #a0a0a0;
    text-shadow: 1px 1px #f4f4f4;
}

/* authorization window */
.auth {
    position: absolute;
    right: 1px;
    top: 209px;
    bottom: 1px;
    width: 665px;
    display: flex;
    flex-direction: column;
    padding: 0 7px 8px;
    border: 1px solid #4f6272;
    border-radius: 5px;
    background: linear-gradient(#e4eef7, #b4cbdf 34px, #b9cfe2 60%, #cfe2f2);
    color: #1e2a38;
    box-shadow: inset 0 0 0 1px #e3f0fa;
}
.auth button {
    color: #1e3044;
}
.auth-bar {
    flex: none;
    display: flex;
    align-items: flex-start;
    height: 31px;
    font-weight: normal;
    color: #000;
}
.auth-bar > svg {
    margin: 6px 3px 0 1px;
}
.auth-bar > span:first-of-type {
    line-height: 29px;
    font-size: 12px;
}
.mosaic {
    display: grid;
    grid-template-columns: 15px 15px 15px;
    grid-auto-rows: 13px;
    margin: 1px 0 0 1px;
}
.mosaic i { background: #c6ccd6; }
.mosaic i:nth-child(3n+2) { background: #cdd0da; }
.mosaic i:nth-child(n+4) { background: #b6c6d8; }
.caption-btns {
    display: flex;
    margin-left: auto;
    margin-right: 1px;
}
.caption-btns button {
    display: flex;
    align-items: center;
    justify-content: center;
    width: 26px;
    height: 17px;
    border: 1px solid #8ba3ba;
    border-top: 0;
    background: linear-gradient(#dbe8f3, #c0d3e4);
}
.caption-btns .x {
    width: 43px;
    border-left: 0;
    border-radius: 0 0 4px 0;
}
.auth-head {
    flex: none;
    display: flex;
    align-items: center;
    justify-content: space-between;
    height: 45px;
    padding: 0 1px 0 9px;
    border: 1px solid #7896bb;
    border-radius: 3px;
    background: linear-gradient(#bfd1e1, #9fb9cf 45%, #85a6c0 52%, #8db5ce 70%, #a9e0f6);
    box-shadow: inset 0 0 0 1px #d9e8f4;
}
.auth-head h2 {
    font-size: 19px;
}
.auth-head button {
    width: 42px;
    height: 42px;
    display: flex;
    align-items: center;
    justify-content: center;
    border: 1px solid #6f8fb8;
    border-radius: 3px;
    background: linear-gradient(#c8d9e8, #9dbbd3 50%, #c4e9f8);
    box-shadow: inset 0 0 0 1px #e8f3fb;
}
.auth-box {
    flex: none;
    background: #dceaf8;
    border: 1px solid #a3bfdc;
    border-radius: 3px;
    box-shadow: inset 0 0 0 1px #f3f9ff;
}
.who {
    display: flex;
    justify-content: space-between;
    height: 65px;
    margin-top: 2px;
    padding: 1px 8px 0 15px;
}
.who-left {
    display: grid;
    grid-template-columns: 50px 216px 66px;
    grid-auto-rows: 25px;
    column-gap: 3px;
    row-gap: 1px;
}
.who-left label {
    text-align: right;
    line-height: 28px;
}
.auth select, .auth input[type="text"] {
    height: 20px;
    border: 1px solid #b0c8e0;
    border-top-color: #8fa9c4;
    border-radius: 3px;
    background-color: #fff;
    color: #000;
}
.auth select {
    margin-top: 1px;
    padding-left: 4px;
    background-image: url("data:image/svg+xml,%3Csvg xmlns='http://www.w3.org/2000/svg' width='9' height='5'%3E%3Cpath d='M1 0h7L4.500 4z' fill='%23222'/%3E%3C/svg%3E");
    background-position: right 4px center;
}
.who-left button {
    border: 1px solid #a9c1dd;
    border-radius: 3px;
    background: linear-gradient(#e8f2fc, #d3e4f4);
    box-shadow: inset 0 0 0 1px #f4faff;
}
.who-right {
    padding-top: 3px;
}
.year {
    display: flex;
    align-items: center;
    justify-content: flex-end;
    gap: 3px;
}
.year-box {
    display: flex;
    align-items: center;
    width: 124px;
    padding-right: 7px;
    background: #fff;
    border: 1px solid #b0c8e0;
    border-top-color: #8fa9c4;
    border-radius: 3px;
}
.auth .year-box input {
    border: 0;
    width: 100%;
    height: 18px;
}
.who-right p {
    margin-top: 2px;
    font-size: 10px;
    padding-right: 32px;
    white-space: nowrap;
}
.auth-tabs {
    flex: none;
    display: flex;
    align-items: flex-end;
    height: 21px;
}
.auth-tablist {
    display: flex;
    align-items: flex-end;
    flex: 1;
    min-width: 0;
    overflow: hidden;
    gap: 1px;
}
.auth-tablist button {
    flex: none;
    height: 18px;
    padding: 0 3px;
    border: 1px solid #9cb8d6;
    border-bottom: 0;
    border-radius: 2px 2px 0 0;
    background: linear-gradient(#dbe8f4, #bdd2e6);
    white-space: nowrap;
}
.auth-tablist .active {
    height: 21px;
    padding: 0 3px 2px;
    background: linear-gradient(#fff, #e4f0fb);
}
.spin {
    display: flex;
    margin-bottom: 2px;
}
.spin button {
    width: 17px;
    height: 17px;
    border: 1px solid #a3bfdc;
    background: linear-gradient(#edf5fc, #cfe0f1);
    display: flex;
    align-items: center;
    justify-content: center;
}
.spin button::after, .tri-left, .tri-right {
    content: "";
    border: solid transparent;
    border-width: 4px 4px 4px 0;
    border-right-color: #35597f;
}
.spin .r::after, .tri-right {
    border-width: 4px 0 4px 4px;
    border-left-color: #35597f;
}
.auth-page {
    flex: 1;
    min-height: 0;
    display: flex;
    flex-direction: column;
    padding: 3px 3px 1px;
    background: #dceaf8;
    border: 1px solid #a3bfdc;
}
.auth-user {
    flex: none;
    height: 48px;
    padding: 3px 5px;
    border: 1px solid #a3bfdc;
    border-radius: 2px;
    box-shadow: inset 0 0 0 1px #f3f9ff;
    font: bold 16px/19px "Liberation Sans", Arial, sans-serif;
    color: #2a3440;
}
.auth-search {
    flex: none;
    display: flex;
    align-items: center;
    gap: 5px;
    height: 30px;
    margin-top: 1px;
    padding: 0 3px 0 37px;
    border: 1px solid #a3bfdc;
    border-bottom: 0;
}
.auth-search label {
    width: 71px;
    text-align: right;
    white-space: nowrap;
}
.auth-search input {
    flex: 1;
    padding-left: 2px;
}
.tree {
    position: relative;
    flex: 1;
    min-height: 0;
    display: flex;
    overflow: hidden;
    background: #fff;
    border: solid #a3bfdc;
    border-width: 1px 1px 0;
}
.rows {
    flex: 1;
    padding: 1px 0 0 4px;
}
.rows li {
    display: flex;
    height: 16px;
    color: #000;
    white-space: nowrap;
}
/* dotted tree lines, one 19x16 tile per level */
.g, .t, .o {
    flex: none;
    width: 19px;
    height: 16px;
    background: url("data:image/svg+xml,%3Csvg xmlns='http://www.w3.org/2000/svg' width='19' height='16'%3E%3Cpath d='M9.500 0V16' stroke='%23555' stroke-dasharray='1 1'/%3E%3C/svg%3E");
}
.t {
    background-image: url("data:image/svg+xml,%3Csvg xmlns='http://www.w3.org/2000/svg' width='19' height='16'%3E%3Cpath d='M9.500 0V16M11 8.500H19' stroke='%23555' stroke-dasharray='1 1'/%3E%3C/svg%3E");
}
.t.last {
    background-image: url("data:image/svg+xml,%3Csvg xmlns='http://www.w3.org/2000/svg' width='19' height='16'%3E%3Cpath d='M9.500 0V9M11 8.500H19' stroke='%23555' stroke-dasharray='1 1'/%3E%3C/svg%3E");
}
.o {
    background-image: url("data:image/svg+xml,%3Csvg xmlns='http://www.w3.org/2000/svg' width='19' height='16'%3E%3Cpath d='M5 6l4 4 4-4' fill='none' stroke='%23444' stroke-width='1.500'/%3E%3C/svg%3E");
}
.n4 { width: 76px; }
.n5 { width: 95px; }
.n6 { width: 114px; }
.rows label {
    display: flex;
    align-items: center;
    gap: 3px;
    margin-left: 1px;
}
.rows input {
    appearance: none;
    width: 14px;
    height: 14px;
    border: 1px solid #1d5f9c;
    background:
        url("data:image/svg+xml,%3Csvg xmlns='http://www.w3.org/2000/svg' width='12' height='12'%3E%3Cpath d='M2 6l3 4 5-8' fill='none' stroke='%23000' stroke-width='2'/%3E%3C/svg%3E"),
        linear-gradient(#a9c9e6, #4f9fd8 50%, #5cc0f0);
}
.vscroll {
    width: 17px;
    background: linear-gradient(90deg, #fff, #e6f0fa);
    display: flex;
    align-items: flex-end;
    justify-content: center;
    padding-bottom: 6px;
}
.tri-down {
    border: solid transparent;
    border-width: 5px 5px 0;
    border-top-color: #35597f;
}
.hits {
    position: absolute;
    left: 115px;
    right: 1px;
    top: 0;
    height: 199px;
    padding: 3px 2px;
    background: #fff;
    border: solid #e6eef6;
    border-width: 2px;
    border-top-color: #5a646e;
    border-left-color: #5a646e;
    outline: 1px solid #dceaf8;
    outline-offset: -3px;
}
.hits li {
    height: 16px;
    padding-left: 2px;
    color: #000;
    white-space: nowrap;
}
.hits .sel {
    background: #c3d9ea;
    color: #1e2f40;
}
.marker {
    position: absolute;
    left: 114px;
    top: 83px;
    width: 489px;
    height: 36px;
    border: 3px solid #fa0552;
    border-radius: 2px;
    box-shadow: 1px 2px 3px rgba(0, 0, 0, .4);
}
.tree-scroll {
    flex: none;
    display: flex;
    align-items: center;
    height: 19px;
    padding: 0 24px 2px 8px;
    background: #e6f1fb;
    border: 1px solid #a3bfdc;
    border-top: 0;
}
.pill {
    flex: 0 1 550px;
    height: 13px;
    margin: 0 auto 0 6px;
    border: 1px solid #a3bfdc;
    border-radius: 7px;
    background: linear-gradient(#dce8f5, #fff 60%);
}
.auth-status {
    flex: none;
    display: flex;
    align-items: center;
    justify-content: space-between;
    height: 19px;
    margin: 1px -2px 0;
    padding: 0 1px 0 2px;
    border-top: 1px solid #a3bfdc;
    background: linear-gradient(#d6e5f2, #b9d3e6 50%, #c6ecfb);
    font-weight: normal;
    font-size: 12px;
}
.auth-status svg {
    align-self: flex-end;
}
.foot {
    margin-top: 2px;
    padding: 7px 6px 6px;
}
.foot button {
    width: 258px;
    height: 24px;
    border: 1px solid #6c8cb5;
    border-radius: 3px;
    background: linear-gradient(#dbe8f4, #c2d7e8 45%, #b0cbe0 50%, #bcd8ea);
    box-shadow: inset 0 0 0 1px #e8f3fb;
}
```
